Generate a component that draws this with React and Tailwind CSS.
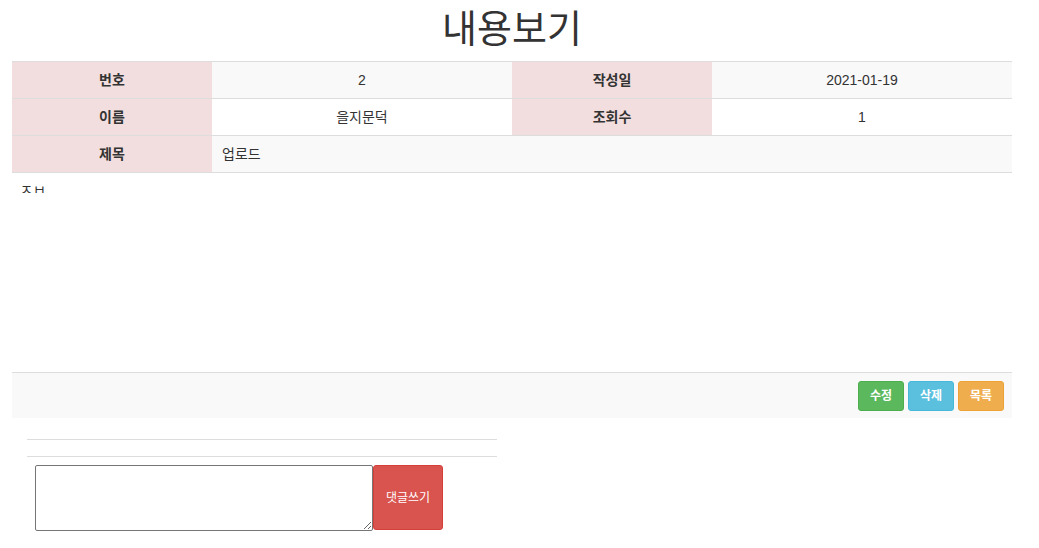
export default function App() {
  const font = { fontFamily: '"Liberation Sans", "Noto Sans CJK KR", Arial, sans-serif' };
  return (
    <div className="min-h-[548px] bg-white text-[14px] text-[#333] leading-[20px]" style={font}>
      <h1 className="ml-[12px] w-[1000px] text-center text-[38px] leading-[40px] font-normal pt-[9px] pb-[12px]">내용보기</h1>
      <div className="ml-[12px] w-[1000px]">
        <div className="grid grid-cols-[200px_300px_200px_300px] border-t border-[#ddd] bg-[#f9f9f9]">
          <div className="h-[36px] flex items-center justify-center bg-[#f2dede] font-bold">번호</div>
          <div className="h-[36px] flex items-center justify-center">2</div>
          <div className="h-[36px] flex items-center justify-center bg-[#f2dede] font-bold">작성일</div>
          <div className="h-[36px] flex items-center justify-center">2021-01-19</div>
        </div>
        <div className="grid grid-cols-[200px_300px_200px_300px] border-t border-[#ddd] bg-white">
          <div className="h-[36px] flex items-center justify-center bg-[#f2dede] font-bold">이름</div>
          <div className="h-[36px] flex items-center justify-center">을지문덕</div>
          <div className="h-[36px] flex items-center justify-center bg-[#f2dede] font-bold">조회수</div>
          <div className="h-[36px] flex items-center justify-center">1</div>
        </div>
        <div className="grid grid-cols-[200px_800px] border-t border-[#ddd] bg-[#f9f9f9]">
          <div className="h-[36px] flex items-center justify-center bg-[#f2dede] font-bold">제목</div>
          <div className="h-[36px] flex items-center pl-[10px]">업로드</div>
        </div>
        <div className="border-t border-[#ddd] h-[200px] px-[8px] pt-[7px]">
          <div className="h-[13px] overflow-hidden">ㅈㅂ</div>
        </div>
        <div className="border-t border-[#ddd] bg-[#f9f9f9] h-[46px] flex items-center justify-end gap-[4px] pr-[8px]">
          <button className="w-[46px] h-[30px] text-[12px] font-bold text-white rounded-[3px] bg-[#5cb85c] border border-[#4cae4c]">수정</button>
          <button className="w-[46px] h-[30px] text-[12px] font-bold text-white rounded-[3px] bg-[#5bc0de] border border-[#46b8da]">삭제</button>
          <button className="w-[46px] h-[30px] text-[12px] font-bold text-white rounded-[3px] bg-[#f0ad4e] border border-[#eea236]">목록</button>
        </div>
      </div>
      <div className="ml-[27px] w-[470px] mt-[21px]">
        <div className="border-t border-[#ddd]"></div>
        <div className="border-t border-[#ddd] mt-[16px]"></div>
      </div>
      <div className="ml-[35px] mt-[8px] flex items-start">
        <textarea className="w-[338px] h-[66px] border border-[#767676] rounded-[2px] resize-y bg-white outline-none"></textarea>
        <button className="w-[70px] h-[65px] text-[12px] text-white bg-[#d9534f] border border-[#d43f3a] rounded-[3px]">댓글쓰기</button>
      </div>
    </div>
  );
}
